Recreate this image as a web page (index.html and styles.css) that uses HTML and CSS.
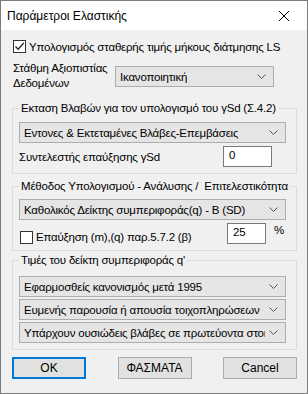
FILE: index.html
```html
<!DOCTYPE html>
<html>
<head>
    <title>Παράμετροι Ελαστικής</title>
    <meta charset="utf-8">
    <link rel="stylesheet" href="styles.css">
</head>
<body>
    <div class="window">
        <div class="titlebar">
            <span class="title">Παράμετροι Ελαστικής</span>
            <span class="close">
                <svg width="12" height="12" viewBox="0 0 12 12"><path d="M1 1L11 11M11 1L1 11" stroke="#000" stroke-width="1"/></svg>
            </span>
        </div>

        <div class="content">
            <!-- LS checkbox -->
            <label class="check-row">
                <span class="checkbox checked">
                    <svg width="11" height="11" viewBox="0 0 11 11"><path d="M1.5 5.5L4.2 8.3L9.7 2" fill="none" stroke="#222" stroke-width="1.3"/></svg>
                </span>
                <span>Υπολογισμός σταθερής τιμής μήκους διάτμησης LS</span>
            </label>

            <div class="reliability">
                <span class="reliability-label">Στάθμη Αξιοπιστίας<br>Δεδομένων</span>
                <div class="combo combo-short">
                    <span>Ικανοποιητική</span>
                    <svg class="chevron" width="9" height="5" viewBox="0 0 9 5"><path d="M0.5 0.5L4.5 4.5L8.5 0.5" fill="none" stroke="#555"/></svg>
                </div>
            </div>

            <!-- Group 1 -->
            <fieldset class="group group-damage">
                <legend>Εκταση Βλαβών για τον υπολογισμό του γSd (Σ.4.2)</legend>
                <div class="combo">
                    <span>Εντονες &amp; Εκτεταμένες Βλάβες-Επεμβάσεις</span>
                    <svg class="chevron" width="9" height="5" viewBox="0 0 9 5"><path d="M0.5 0.5L4.5 4.5L8.5 0.5" fill="none" stroke="#555"/></svg>
                </div>
                <div class="field-row">
                    <span>Συντελεστής επαύξησης γSd</span>
                    <div class="textbox textbox-wide">0</div>
                </div>
            </fieldset>

            <!-- Group 2 -->
            <fieldset class="group group-method">
                <legend>Μέθοδος Υπολογισμού - Ανάλυσης / &nbsp;Επιτελεστικότητα</legend>
                <div class="combo">
                    <span>Καθολικός Δείκτης συμπεριφοράς(q) - B (SD)</span>
                    <svg class="chevron" width="9" height="5" viewBox="0 0 9 5"><path d="M0.5 0.5L4.5 4.5L8.5 0.5" fill="none" stroke="#555"/></svg>
                </div>
                <div class="field-row increase-row">
                    <label class="check-row inner-check">
                        <span class="checkbox"></span>
                        <span>Επαύξηση (m),(q) παρ.5.7.2 (β)</span>
                    </label>
                    <div class="percent">
                        <div class="textbox textbox-narrow">25</div>
                        <span class="percent-sign">%</span>
                    </div>
                </div>
            </fieldset>

            <!-- Group 3 -->
            <fieldset class="group group-q">
                <legend>Τιμές του δείκτη συμπεριφοράς q'</legend>
                <div class="combo-stack">
                    <div class="combo">
                        <span>Εφαρμοσθείς κανονισμός μετά 1995</span>
                        <svg class="chevron" width="9" height="5" viewBox="0 0 9 5"><path d="M0.5 0.5L4.5 4.5L8.5 0.5" fill="none" stroke="#555"/></svg>
                    </div>
                    <div class="combo">
                        <span>Ευμενής παρουσία ή απουσία τοιχοπληρώσεων</span>
                        <svg class="chevron" width="9" height="5" viewBox="0 0 9 5"><path d="M0.5 0.5L4.5 4.5L8.5 0.5" fill="none" stroke="#555"/></svg>
                    </div>
                    <div class="combo">
                        <span>Υπάρχουν ουσιώδεις βλάβες σε πρωτεύοντα στοιχε</span>
                        <svg class="chevron" width="9" height="5" viewBox="0 0 9 5"><path d="M0.5 0.5L4.5 4.5L8.5 0.5" fill="none" stroke="#555"/></svg>
                    </div>
                </div>
            </fieldset>

            <div class="buttons">
                <button class="btn btn-default">OK</button>
                <button class="btn">ΦΑΣΜΑΤΑ</button>
                <button class="btn">Cancel</button>
            </div>
        </div>
    </div>
</body>
</html>
```

FILE: styles.css
```css
/* Dialog shell */
body {
    margin: 0;
    font-family: "Liberation Sans", Arial, sans-serif;
    font-size: 11.5px;
    letter-spacing: -0.2px;
    color: #000;
    white-space: nowrap;
}

.window {
    width: 308px;
    height: 394px;
    box-sizing: border-box;
    border: 1px solid #7a7a7a;
    background: #f0f0f0;
    display: flex;
    flex-direction: column;
}

.titlebar {
    height: 29px;
    background: #fff;
    display: flex;
    align-items: center;
    justify-content: space-between;
    padding-left: 6px;
}

.title {
    font-size: 12px;
    letter-spacing: 0;
}

.close {
    width: 46px;
    display: flex;
    justify-content: center;
}

.content {
    padding: 10px 0 0 11px;
    display: flex;
    flex-direction: column;
}

/* Checkboxes */
.check-row {
    display: flex;
    align-items: center;
    gap: 3px;
    height: 13px;
    margin-left: 1px;
}

.checkbox {
    width: 13px;
    height: 13px;
    box-sizing: border-box;
    border: 1px solid #333;
    background: #fff;
    display: flex;
    align-items: center;
    justify-content: center;
    flex: none;
}

/* Reliability row */
.reliability {
    display: flex;
    margin-top: 8px;
}

.reliability-label {
    width: 102px;
    line-height: 15px;
    margin-left: 1px;
}

/* Combo boxes */
.combo {
    width: 267px;
    height: 21px;
    box-sizing: border-box;
    border: 1px solid #adadad;
    background: #e5e5e5;
    display: flex;
    align-items: center;
    justify-content: space-between;
    padding: 0 7px 0 4px;
    overflow: hidden;
}

.combo span {
    overflow: hidden;
}

.chevron {
    flex: none;
    margin-left: 4px;
}

.combo-short {
    width: 159px;
    margin-top: 5px;
}

.combo-stack {
    display: flex;
    flex-direction: column;
    gap: 2px;
}

/* Group boxes */
.group {
    width: 285px;
    box-sizing: border-box;
    border: 1px solid #dcdcdc;
    margin: 10px 0 0 0;
    padding: 6px 6px 6px;
}

.group legend {
    padding: 0 2px;
    line-height: 15px;
}

.group-method {
    margin-top: 5px;
    padding-top: 5px;
}

.group-q {
    margin-top: 2px;
    padding-top: 4px;
}

.group-q .combo-stack {
    margin-top: 4px;
}

.field-row {
    display: flex;
    align-items: center;
    justify-content: space-between;
    margin-top: 3px;
    width: 253px;
}

.textbox {
    height: 21px;
    box-sizing: border-box;
    border: 1px solid #7a7a7a;
    background: #fff;
    padding: 2px 5px;
}

.textbox-wide {
    width: 49px;
}

.textbox-narrow {
    width: 39px;
}

.increase-row {
    width: 267px;
    margin-top: 3px;
}

.inner-check {
    margin-top: 7px;
}

.percent {
    display: flex;
    align-items: flex-start;
}

.percent-sign {
    margin: 1px 2px 0 8px;
}

/* Buttons */
.buttons {
    display: flex;
    justify-content: space-between;
    width: 285px;
    margin-top: 7px;
}

.btn {
    width: 74px;
    height: 22px;
    box-sizing: border-box;
    border: 1px solid #adadad;
    background: #e1e1e1;
    font-family: inherit;
    font-size: 12px;
    padding: 0;
}

.btn-default {
    border: 2px solid #0078d7;
}
```
